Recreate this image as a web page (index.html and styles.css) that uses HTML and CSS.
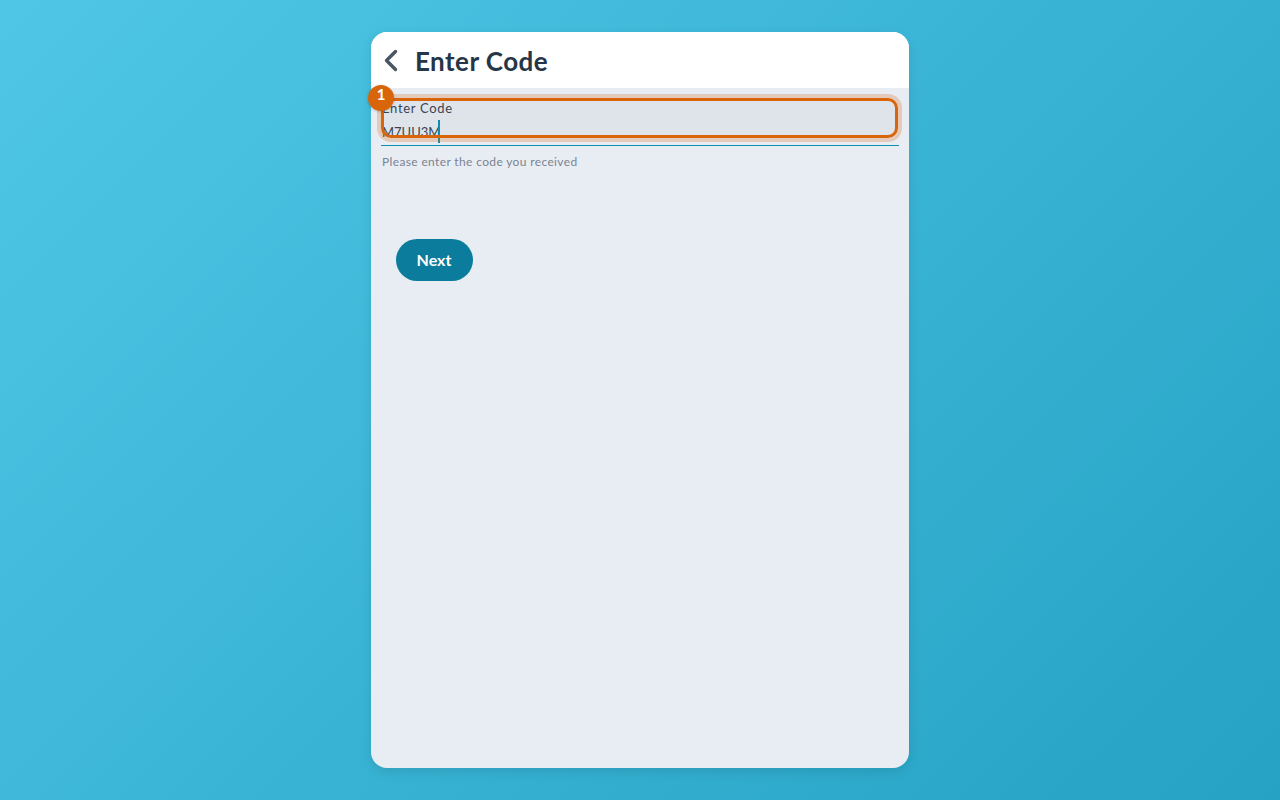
FILE: index.html
```html
<!DOCTYPE html>
<html lang="en">
<head>
<meta charset="UTF-8">
<meta name="viewport" content="width=device-width, initial-scale=1.0">
<title>Enter Code</title>
<link rel="stylesheet" href="styles.css">
</head>
<body>
<div class="card">
    <div class="header">
        <svg class="back" width="16" height="24" viewBox="0 0 16 24" fill="none"><path d="M12.5 2.5 L3.5 11.5 L12.5 20.5" stroke="#4b5563" stroke-width="3.4" stroke-linecap="round" stroke-linejoin="round"/></svg>
        <h1>Enter Code</h1>
    </div>
    <div class="content">
        <div class="field">
            <div class="field-label">Enter Code</div>
            <div class="field-value"><span>M7UU3M</span><span class="caret"></span></div>
            <div class="highlight"></div>
            <div class="badge">1</div>
        </div>
        <div class="hint">Please enter the code you received</div>
        <button class="next">Next</button>
    </div>
</div>
</body>
</html>
```
FILE: styles.css
```css
* {
    box-sizing: border-box;
}

body {
    margin: 0;
    height: 800px;
    padding: 32px 0;
    overflow: hidden;
    font-family: 'Lato', 'Open Sans', sans-serif;
    background: linear-gradient(135deg, #4fc6e6 0%, #25a2c4 100%);
}

.card {
    width: 538px;
    height: 736px;
    margin: 0 auto;
    border-radius: 16px;
    background-color: #e8edf4;
    box-shadow: 0 4px 12px rgba(0, 0, 0, 0.1);
}

.header {
    display: flex;
    align-items: center;
    height: 56px;
    padding: 0 0 0 12px;
    border-radius: 16px 16px 0 0;
    background-color: #fff;
}

.back {
    margin-top: 1px;
}

.header h1 {
    margin: 2px 0 0 16px;
    color: #263548;
    font-size: 26px;
    font-weight: 700;
    letter-spacing: 0.45px;
}

.content {
    padding: 9px 10px 0;
}

.field {
    position: relative;
    height: 49px;
    padding: 3px 1px 0;
    border-bottom: 1px solid #0b8fb0;
}

.field-label {
    height: 21px;
    color: #374151;
    font-size: 13px;
    line-height: 16px;
    letter-spacing: 0.7px;
}

.field-value {
    display: flex;
    height: 23px;
    color: #374151;
    font-size: 13px;
    line-height: 22px;
}

.caret {
    width: 2px;
    height: 23px;
    margin: -1px 0 0 -2px;
    background-color: #0b8fb0;
}

.highlight {
    position: absolute;
    top: 1px;
    left: 0;
    width: 517px;
    height: 40px;
    border: 3px solid #d9650b;
    border-radius: 10px;
    background-color: rgba(120, 110, 110, 0.07);
    box-shadow: 0 0 0 4px rgba(217, 101, 11, 0.25);
}

.badge {
    position: absolute;
    top: -12px;
    left: -13px;
    width: 26px;
    height: 26px;
    border-radius: 50%;
    background-color: #d9650b;
    color: #fff;
    font-size: 15px;
    font-weight: 700;
    line-height: 19px;
    text-align: center;
    box-shadow: 0 1px 3px rgba(0, 0, 0, 0.2);
}

.hint {
    margin: 8px 0 0 1px;
    color: #7b8490;
    font-size: 12px;
    font-weight: 400;
    line-height: 16px;
    letter-spacing: 0.36px;
}

.next {
    display: block;
    width: 77px;
    height: 42px;
    margin: 69px 0 0 15px;
    padding: 0 1px 2px 0;
    border: none;
    border-radius: 21px;
    background-color: #0b7c9c;
    color: #fff;
    font-family: inherit;
    font-size: 16px;
    font-weight: 700;
}
```
